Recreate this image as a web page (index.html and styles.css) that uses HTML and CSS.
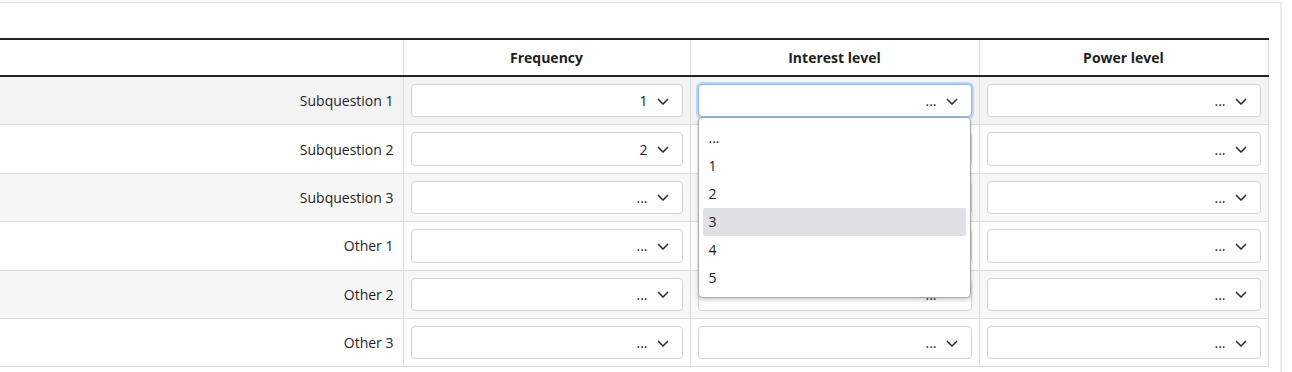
FILE: index.html
```html
<!DOCTYPE html>
<html lang="en">
	<head>
		<meta charset="UTF-8" />
		<meta name="viewport" content="width=device-width, initial-scale=1.0" />
		<title>Array question</title>
		<link rel="stylesheet" href="styles.css">
	</head>
	<body>
		<div class="card">
			<table class="answers">
				<colgroup>
					<col class="c-label" />
					<col class="c-freq" />
					<col class="c-opt" />
					<col class="c-opt" />
				</colgroup>
				<thead>
					<tr>
						<th class="label-col"></th>
						<th>Frequency</th>
						<th>Interest level</th>
						<th>Power level</th>
					</tr>
				</thead>
				<tbody>
					<tr class="odd hover">
						<td class="label">Subquestion 1</td>
						<td><div class="select"><span>1</span><svg class="chev" viewBox="0 0 12 7"><path d="M1 1l5 5 5-5" /></svg></div></td>
						<td>
							<div class="cell-wrap">
								<div class="select focused"><span>...</span><svg class="chev" viewBox="0 0 12 7"><path d="M1 1l5 5 5-5" /></svg></div>
								<ul class="menu">
									<li>...</li>
									<li>1</li>
									<li>2</li>
									<li class="active">3</li>
									<li>4</li>
									<li>5</li>
								</ul>
							</div>
						</td>
						<td><div class="select"><span>...</span><svg class="chev" viewBox="0 0 12 7"><path d="M1 1l5 5 5-5" /></svg></div></td>
					</tr>
					<tr>
						<td class="label">Subquestion 2</td>
						<td><div class="select"><span>2</span><svg class="chev" viewBox="0 0 12 7"><path d="M1 1l5 5 5-5" /></svg></div></td>
						<td><div class="select"><span>...</span><svg class="chev" viewBox="0 0 12 7"><path d="M1 1l5 5 5-5" /></svg></div></td>
						<td><div class="select"><span>...</span><svg class="chev" viewBox="0 0 12 7"><path d="M1 1l5 5 5-5" /></svg></div></td>
					</tr>
					<tr class="odd">
						<td class="label">Subquestion 3</td>
						<td><div class="select"><span>...</span><svg class="chev" viewBox="0 0 12 7"><path d="M1 1l5 5 5-5" /></svg></div></td>
						<td><div class="select"><span>...</span><svg class="chev" viewBox="0 0 12 7"><path d="M1 1l5 5 5-5" /></svg></div></td>
						<td><div class="select"><span>...</span><svg class="chev" viewBox="0 0 12 7"><path d="M1 1l5 5 5-5" /></svg></div></td>
					</tr>
					<tr>
						<td class="label">Other 1</td>
						<td><div class="select"><span>...</span><svg class="chev" viewBox="0 0 12 7"><path d="M1 1l5 5 5-5" /></svg></div></td>
						<td><div class="select"><span>...</span><svg class="chev" viewBox="0 0 12 7"><path d="M1 1l5 5 5-5" /></svg></div></td>
						<td><div class="select"><span>...</span><svg class="chev" viewBox="0 0 12 7"><path d="M1 1l5 5 5-5" /></svg></div></td>
					</tr>
					<tr class="odd">
						<td class="label">Other 2</td>
						<td><div class="select"><span>...</span><svg class="chev" viewBox="0 0 12 7"><path d="M1 1l5 5 5-5" /></svg></div></td>
						<td><div class="select"><span>...</span><svg class="chev" viewBox="0 0 12 7"><path d="M1 1l5 5 5-5" /></svg></div></td>
						<td><div class="select"><span>...</span><svg class="chev" viewBox="0 0 12 7"><path d="M1 1l5 5 5-5" /></svg></div></td>
					</tr>
					<tr>
						<td class="label">Other 3</td>
						<td><div class="select"><span>...</span><svg class="chev" viewBox="0 0 12 7"><path d="M1 1l5 5 5-5" /></svg></div></td>
						<td><div class="select"><span>...</span><svg class="chev" viewBox="0 0 12 7"><path d="M1 1l5 5 5-5" /></svg></div></td>
						<td><div class="select"><span>...</span><svg class="chev" viewBox="0 0 12 7"><path d="M1 1l5 5 5-5" /></svg></div></td>
					</tr>
				</tbody>
			</table>
		</div>
	</body>
</html>
```

FILE: styles.css
```css
body {
	margin: 0;
	padding-top: 2px;
	font-family: "Open Sans", "Noto Sans", sans-serif;
	font-size: 14px;
	color: #1e1e1e;
	background: #fff;
}

.card {
	width: 1268px;
	padding: 35px 12px 10px 0;
	border-top: 1px solid #e6e6e6;
	border-right: 2px solid #ececec;
}

.answers {
	width: 1268px;
	border-collapse: collapse;
	table-layout: fixed;
}

.c-label {
	width: 403px;
}

.c-freq {
	width: 287px;
}

.c-opt {
	width: 289px;
}

.answers th {
	height: 35px;
	padding: 0 8px;
	font-size: 14px;
	font-weight: 700;
	text-align: center;
	border-top: 2px solid #222;
	border-bottom: 2px solid #222;
	border-left: 1px solid #dcdcdc;
	border-right: 1px solid #dcdcdc;
}

.answers th.label-col {
	border-left: none;
}

.answers td {
	padding: 7px 7px 7px;
	height: 33.4px;
	border-bottom: 1px solid #dcdcdc;
	border-left: 1px solid #dcdcdc;
	border-right: 1px solid #dcdcdc;
}

.answers td.label {
	border-left: none;
	text-align: right;
	padding-right: 9px;
}

.answers tr.odd td {
	background: #f7f7f7;
}

.answers tr.hover td {
	background: #f3f3f3;
}

.select {
	display: flex;
	align-items: center;
	justify-content: flex-end;
	gap: 9px;
	height: 33.4px;
	box-sizing: border-box;
	padding: 1px 13px 0 10px;
	background: #fff;
	border: 1px solid #d4d4d4;
	border-radius: 4px;
}

.select span {
	line-height: 1;
}

.select.focused {
	border-color: #8fb8f5;
	box-shadow: 0 0 0 2px #b9d4fb;
}

.chev {
	width: 12px;
	height: 7px;
	fill: none;
	stroke: #2b2b2b;
	stroke-width: 1.5;
}

.cell-wrap {
	position: relative;
}

.menu {
	position: absolute;
	top: 33px;
	left: 0;
	right: 1px;
	z-index: 5;
	margin: 0;
	padding: 6px 4px 5px;
	list-style: none;
	background: #fff;
	border: 1px solid #a8a8a8;
	border-radius: 4px;
	box-shadow: 0 2px 4px rgba(0, 0, 0, 0.2);
}

.menu li {
	height: 28px;
	line-height: 28px;
	padding: 0 6px;
	border-radius: 2px;
}

.menu li.active {
	background: #e1e0e6;
}
```
